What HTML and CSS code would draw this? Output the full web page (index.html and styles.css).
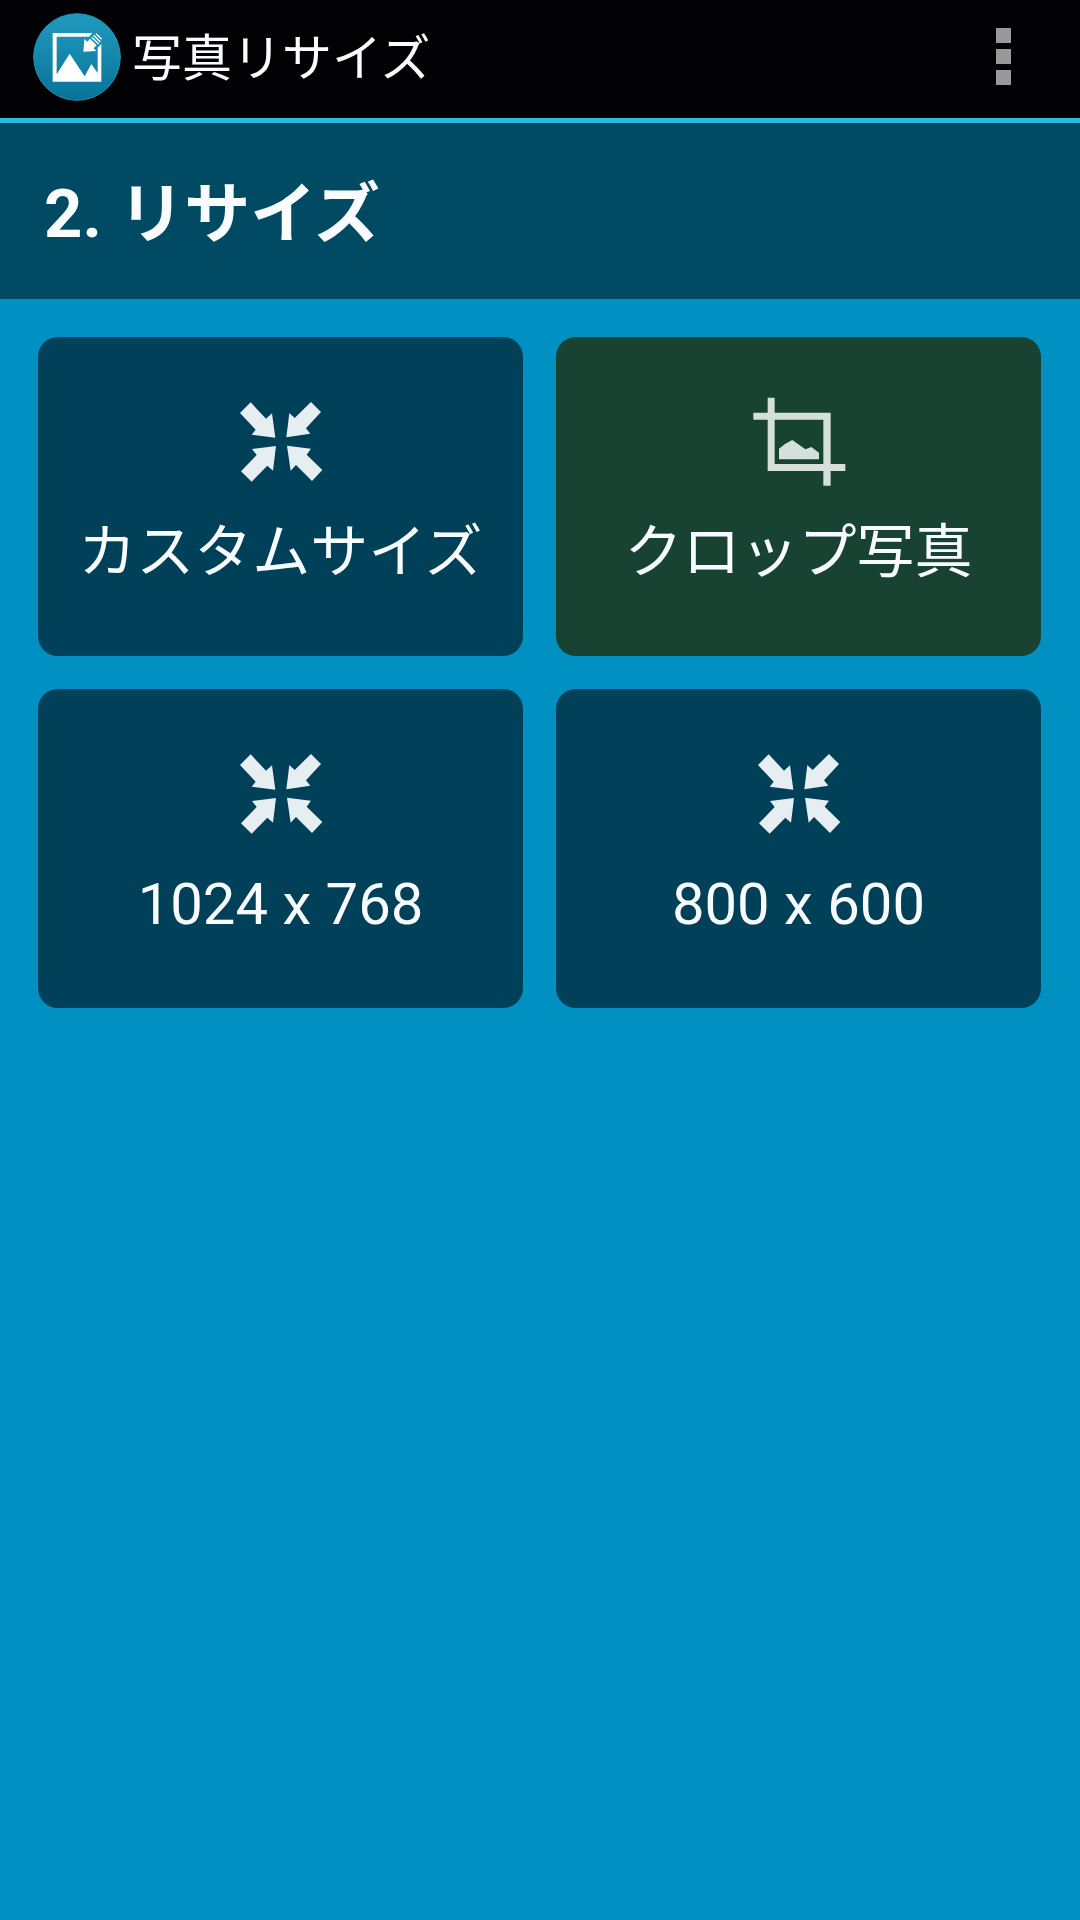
FILE: index.html
```
<!DOCTYPE html>
<html lang="ja">

<head>
  <meta charset="utf-8">
  <title>写真リサイズ</title>
  <meta name="viewport" content="width=device-width, initial-scale=1">
  <link rel="stylesheet" href="styles.css">
</head>

<body>
  <!-- shared arrows icon -->
  <svg class="defs" width="0" height="0">
    <symbol id="shrink" viewBox="2 0 360 360">
      <path d="M91 67L137 116L155 100L165 173L94 164L106 149L59 99Z" />
      <path d="M272 66L302 96L257 145L270 161L198 172L207 99L223 114Z" />
      <path d="M167 198L158 272L141 257L94 305L62 274L109 225L95 207Z" />
      <path d="M200 197L272 206L259 224L306 270L275 303L227 255L211 272Z" />
    </symbol>
  </svg>

  <div class="topbar">
    <svg class="logo" viewBox="0 0 264 264">
      <defs>
        <linearGradient id="logoBg" x1="0" y1="0" x2="0" y2="1">
          <stop offset="0" stop-color="#219ac0" />
          <stop offset="1" stop-color="#087398" />
        </linearGradient>
      </defs>
      <circle cx="132" cy="132" r="130" fill="url(#logoBg)" stroke="#2393b8" stroke-width="3" />
      <path d="M178 60H59V206H205V92L194 104V180L175 153L155 190L110 122L71 184V71H168Z" fill="#fff" />
      <path d="M151 116L154 78L163 86L171 77L191 97L182 106L190 114Z" fill="#fff" />
      <path d="M176 73L197 93M182 67L202 87M189 62L206 79" stroke="#fff" stroke-width="4" />
    </svg>
    <span class="app-name">写真リサイズ</span>
    <div class="menu">
      <i></i>
      <i></i>
      <i></i>
    </div>
  </div>

  <h2>2. <span>リサイズ</span></h2>

  <div class="container">
    <button class="button">
      <svg class="icon"><use href="#shrink" /></svg>
      <span>カスタムサイズ</span>
    </button>
    <button class="button crop">
      <svg class="icon" viewBox="-3 0 360 360">
        <path d="M40 98H83V53H104V98H272V252H316V273H272V317H250V273H83V119H40ZM104 119V252H250V119Z" fill-rule="evenodd" />
        <path d="M117 238V206L136 191L157 180L196 208L214 201L237 218V238Z" />
      </svg>
      <span>クロップ写真</span>
    </button>
    <button class="button">
      <svg class="icon"><use href="#shrink" /></svg>
      <span>1024 x 768</span>
    </button>
    <button class="button">
      <svg class="icon"><use href="#shrink" /></svg>
      <span>800 x 600</span>
    </button>
  </div>
</body>

</html>
```
FILE: styles.css
```
* {
  box-sizing: border-box;
}

body {
  margin: 0;
  min-height: 1920px;
  background-color: #0090c2;
  color: #f8fcff;
  font-family: Roboto, "Noto Sans CJK JP", sans-serif;
}

.defs {
  display: block;
}

.topbar {
  display: flex;
  align-items: center;
  height: 123px;
  padding: 0 69px 5px 33px;
  background-color: #020204;
  border-bottom: 5px solid #30b9e0;
}

.logo {
  width: 88px;
  height: 88px;
}

.app-name {
  margin-left: 11px;
  padding-top: 4px;
  font-size: 50px;
  line-height: 88px;
}

.menu {
  display: flex;
  flex-direction: column;
  gap: 6px;
  margin-left: auto;
}

.menu i {
  width: 15px;
  height: 15px;
  background-color: #999;
}

h2 {
  height: 176px;
  margin: 0;
  padding: 3px 0 0 44px;
  background-color: #004a63;
  font-size: 67px;
  font-weight: bold;
  line-height: 176px;
}

h2 span {
  font-size: 66px;
  letter-spacing: -0.2px;
}

.container {
  display: grid;
  grid-template-columns: 1fr 1fr;
  gap: 33px;
  padding: 38px 39px 0 38px;
}

.button {
  display: flex;
  flex-direction: column;
  align-items: center;
  height: 319px;
  padding: 43px 0 0;
  background-color: #004058;
  border: none;
  border-radius: 20px;
  color: inherit;
  font-family: inherit;
  font-size: 58px;
  line-height: 104px;
  cursor: pointer;
}

.button.crop {
  background-color: #184232;
}

.icon {
  width: 120px;
  height: 120px;
  fill: #e6eef2;
}

.crop .icon {
  fill: #d5dfdc;
}
```
